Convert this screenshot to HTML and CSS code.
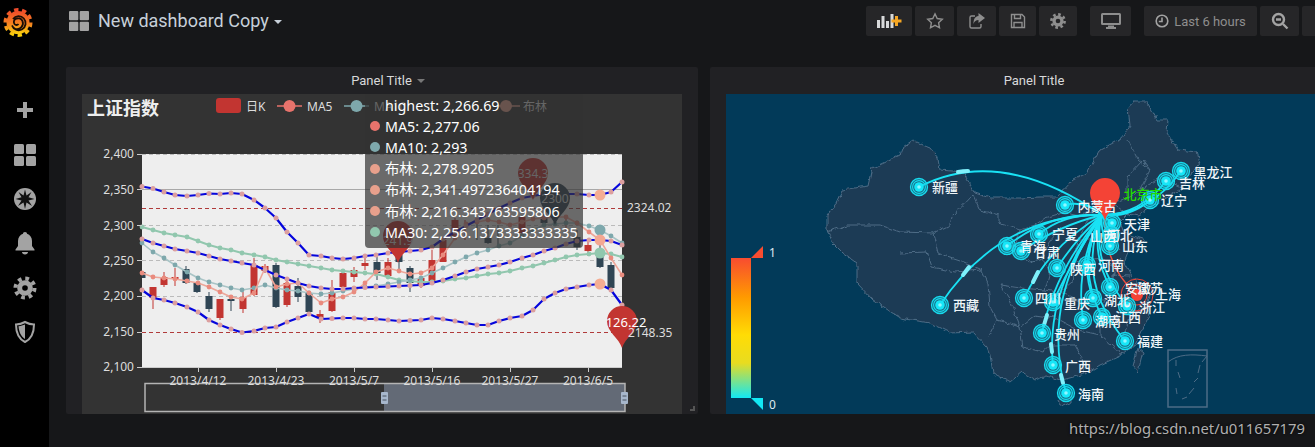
FILE: index.html
```html
<!DOCTYPE html>
<html lang="zh">
<head>
<meta charset="utf-8">
<title>New dashboard Copy</title>
<link rel="stylesheet" href="styles.css">
</head>
<body>
<svg class="defs" width="0" height="0" aria-hidden="true">
  <defs>
    <filter id="wiggle" x="-5%" y="-5%" width="110%" height="110%">
      <feTurbulence type="fractalNoise" baseFrequency=".16" numOctaves="2" seed="4"/>
      <feDisplacementMap in="SourceGraphic" scale="5" xChannelSelector="R" yChannelSelector="G"/>
    </filter>
    <marker id="dotBand" markerWidth="6" markerHeight="6" refX="3" refY="3" markerUnits="userSpaceOnUse"><circle cx="3" cy="3" r="2.500" fill="#dc9f9f"/></marker>
    <marker id="dotMa5" markerWidth="6" markerHeight="6" refX="3" refY="3" markerUnits="userSpaceOnUse"><circle cx="3" cy="3" r="2.400" fill="#e98b7e"/></marker>
    <marker id="dotMa10" markerWidth="6" markerHeight="6" refX="3" refY="3" markerUnits="userSpaceOnUse"><circle cx="3" cy="3" r="2.400" fill="#7ea8ac"/></marker>
    <marker id="dotMa30" markerWidth="6" markerHeight="6" refX="3" refY="3" markerUnits="userSpaceOnUse"><circle cx="3" cy="3" r="2.400" fill="#91c7ae"/></marker>
    <path id="pin" d="M0 27C-3 17-15 11-15 0A15 15 0 1 1 15 0C15 11 3 17 0 27Z"/>
    <g id="ripple">
      <circle r="8.500" fill="#12c4d8" fill-opacity=".35" stroke="#17dcef" stroke-width="1.300"/>
      <circle r="6.400" fill="none" stroke="#17dcef" stroke-width="1.100"/>
      <circle r="4.800" fill="#16e6f8"/>
      <circle r="1.800" fill="#8ff6ff"/>
    </g>
    <g id="cog">
      <circle r="5.600" fill="currentColor"/>
      <circle r="6.600" fill="none" stroke="currentColor" stroke-width="2.600" stroke-dasharray="2.600 2.580"/>
    </g>
    <linearGradient id="heat" x1="0" y1="0" x2="0" y2="1">
      <stop offset="0" stop-color="#f84c30"/>
      <stop offset=".28" stop-color="#ff9a00"/>
      <stop offset=".55" stop-color="#ffdc05"/>
      <stop offset=".75" stop-color="#e8dc20"/>
      <stop offset="1" stop-color="#12e8f4"/>
    </linearGradient>
    <linearGradient id="flame" x1="0" y1="0" x2="0" y2="1">
      <stop offset="0" stop-color="#ee4b2b"/>
      <stop offset=".55" stop-color="#f58220"/>
      <stop offset="1" stop-color="#fbd20c"/>
    </linearGradient>
  </defs>
</svg>

<div class="app">
  <nav class="sidebar">
    <div class="logo">
      <svg width="34" height="36" viewBox="0 0 34 36">
        <circle cx="17" cy="20.500" r="11.500" fill="url(#flame)"/>
        <circle cx="17" cy="20.500" r="12.800" fill="none" stroke="url(#flame)" stroke-width="3.400" stroke-dasharray="4.400 3.600"/>
        <path class="logo-spiral" d="M12 17a7 7 0 1 1-1 6.500 6.400 6.400 0 0 0 3.500 3.500 6 6 0 0 0 7-8 5 5 0 0 0-7-2 3.500 3.500 0 0 0-1 5 2.500 2.500 0 0 0 4 0"/>
      </svg>
    </div>
    <div class="nav-item">
      <svg width="20" height="20" viewBox="0 0 20 20"><path class="ic" d="M8 2h4v6h6v4h-6v6H8v-6H2V8h6z"/></svg>
    </div>
    <div class="nav-item">
      <svg width="24" height="24" viewBox="0 0 24 24"><g class="ic"><rect x="1" y="1" width="10" height="10" rx="1.500"/><rect x="13" y="1" width="10" height="10" rx="1.500"/><rect x="1" y="13" width="10" height="10" rx="1.500"/><rect x="13" y="13" width="10" height="10" rx="1.500"/></g></svg>
    </div>
    <div class="nav-item">
      <svg width="24" height="24" viewBox="0 0 24 24"><circle class="ic" cx="12" cy="12" r="11"/><path class="ic-dark" d="M12 2.500l1.500 6 5-3.500-3 5.200 6 1.800-6 1.500 3.500 5.500-5.500-3.500-1.500 6.500-1.500-6.500-5.500 3.500 3.500-5.500-6-1.500 6-1.800-3-5.200 5 3.500z"/></svg>
    </div>
    <div class="nav-item">
      <svg width="20" height="24" viewBox="0 0 20 24"><path class="ic" d="M10 1c1.300 0 2 .8 2 1.800C15 3.800 17 6.500 17 10v5l2.500 3.500v1H.5v-1L3 15v-5c0-3.500 2-6.200 5-7.200C8 1.800 8.700 1 10 1zM7 21h6c0 1.500-1.300 2.500-3 2.500S7 22.500 7 21z"/></svg>
    </div>
    <div class="nav-item">
      <svg class="cog-side" width="24" height="24" viewBox="-12 -12 24 24"><circle r="7.800" fill="currentColor"/><circle r="9.500" fill="none" stroke="currentColor" stroke-width="4" stroke-dasharray="3.700 3.760"/><circle r="2.800" fill="#000"/></svg>
    </div>
    <div class="nav-item">
      <svg width="22" height="24" viewBox="0 0 22 24"><path class="shield" d="M11 2c3 1.600 6 2.400 9 2.400 0 8-2 14-9 17.600C4 18.400 2 12.400 2 4.400 5 4.400 8 3.600 11 2z"/><path class="ic" d="M11 4.500V19C6.500 16 5 11.500 4.500 6.200 7 6 9 5.400 11 4.500z"/></svg>
    </div>
  </nav>

  <main class="main">
    <header class="topbar">
      <div class="title-wrap">
        <svg class="title-ic" width="20" height="20" viewBox="0 0 20 20"><g class="ic"><rect x="0" y="0" width="9.300" height="9.300" rx="1"/><rect x="10.700" y="0" width="9.300" height="9.300" rx="1"/><rect x="0" y="10.700" width="9.300" height="9.300" rx="1"/><rect x="10.700" y="10.700" width="9.300" height="9.300" rx="1"/></g></svg>
        <span class="title">New dashboard Copy</span>
        <span class="caret"></span>
      </div>
      <div class="tools">
        <div class="btn w46">
          <svg width="26" height="16" viewBox="0 0 26 16"><path fill="#d8d9da" d="M1 7h3v8H1zM5.500 3h3v12h-3zM10 8h3v7h-3zM14.500 1h3v14h-3z"/><path fill="#f5a623" d="M19 3h3v3.500h3.500v3H22V13h-3V9.500h-3.500v-3H19z"/></svg>
        </div>
        <div class="btn w39">
          <svg width="18" height="18" viewBox="0 0 18 18"><path class="ol" d="M9 1.800l2.200 4.700 5.100.7-3.700 3.500.9 5.100L9 13.400l-4.500 2.400.9-5.100L1.700 7.200l5.100-.7z"/></svg>
        </div>
        <div class="btn w39">
          <svg width="18" height="18" viewBox="0 0 18 18"><path class="ol" d="M7 4H3.500A1.500 1.500 0 0 0 2 5.500v9A1.500 1.500 0 0 0 3.500 16h8a1.500 1.500 0 0 0 1.500-1.500V12"/><path class="solid" d="M10.500 1L17 6l-6.500 5V8C8 8 6.500 9 5.500 12c0-5 1.500-7.500 5-8z"/></svg>
        </div>
        <div class="btn w37">
          <svg width="16" height="16" viewBox="0 0 16 16"><path class="ol" d="M1.500 1.500h10.500l2.500 2.500v10.500h-13z"/><path class="ol" d="M4.500 1.500v4h6v-4M4 14.500v-5h8v5"/></svg>
        </div>
        <div class="btn w38 cog-top">
          <svg width="18" height="18" viewBox="-9 -9 18 18"><use href="#cog"/><circle r="2.300" fill="#262628"/></svg>
        </div>
        <div class="btn w41 gap-l">
          <svg width="20" height="18" viewBox="0 0 20 18"><path class="solid" d="M1.500 1h17A1.500 1.500 0 0 1 20 2.500v9a1.500 1.500 0 0 1-1.500 1.500h-17A1.500 1.500 0 0 1 0 11.500v-9A1.500 1.500 0 0 1 1.500 1zM7 13.500h6V15h2v2H5v-2h2z"/><rect x="2" y="3" width="16" height="8" fill="#262628"/></svg>
        </div>
        <div class="btn range gap-l">
          <svg width="14" height="14" viewBox="0 0 14 14"><circle class="ol2" cx="7" cy="7" r="5.800"/><path class="ol2" d="M7 3.500V7.500H3.800"/></svg>
          <span>Last 6 hours</span>
        </div>
        <div class="btn w39">
          <svg width="18" height="18" viewBox="0 0 18 18"><circle class="ol2 thick" cx="7.500" cy="7.500" r="5.500"/><path class="ol2 thick" d="M12 12l4.500 4.500M5 7.500h5"/></svg>
        </div>
        <div class="btn w39"></div>
      </div>
    </header>

    <section class="panels">
      <article class="panel panel-left">
        <div class="panel-head head-left"><span>Panel Title</span><span class="panel-caret"></span></div>
        <div class="chart">
          <svg class="chart-svg" width="600" height="319" viewBox="82 94 600 319">
            <text class="chart-title" x="87" y="115">上证指数</text>
            <rect x="216" y="98" width="25" height="15" rx="3" fill="#c23531"/>
            <text class="legend" x="246" y="111">日K</text>
            <path d="M277 106h25" stroke="#e8736c" stroke-width="1.500"/><circle cx="289.500" cy="106" r="6" fill="#e8736c"/>
            <text class="legend" x="307" y="111">MA5</text>
            <path d="M344 106h25" stroke="#7ea8ac" stroke-width="1.500"/><circle cx="356.500" cy="106" r="6" fill="#7ea8ac"/>
            <text class="legend" x="374" y="111">MA10</text>
            <path d="M497 106h23" stroke="#e8a08c" stroke-width="1.500"/><circle cx="506" cy="106" r="6" fill="#e8a08c"/>
            <text class="legend" x="523" y="111">布林</text>

            <rect x="142" y="154" width="480" height="213" fill="#eeeeee"/>
            <g class="grid">
              <path class="grid-solid" d="M142 189.500H622"/>
              <path d="M142 154.500H622M142 225.500H622M142 260.500H622M142 296.500H622"/>
            </g>
            <path class="mark" d="M142 208.500H622M142 332.500H622"/>

            <g class="wick-r">
              <path d="M153 287V309M164 272V287M175 268V286M220 299V320M243 292V313M254 258V296M265 264V273M287 280V307M320 310V323M332 280V312M354 267V282M365 258V270M388 258V278M421 276V288M432 250V283M443 240V262M455 218V240M465 220V240M522 217V236M566 215V232M588 240V256"/>
            </g>
            <g class="wick-d">
              <path d="M186 266V284M197 282V293M209 292V312M231 296V311M276 263V308M298 278V302M309 291V313M377 257V280M399 250V272M410 266V292M477 220V240M488 225V244M498 225V248M544 214V225M577 230V250M600 245V268M611 262V290"/>
            </g>
            <g class="red">
              <rect x="149.500" y="287" width="7" height="11"/><rect x="160.500" y="277" width="7" height="8"/><rect x="171.500" y="277" width="7" height="2"/><rect x="216.500" y="299" width="7" height="19"/><rect x="239.500" y="297" width="7" height="12"/><rect x="250.500" y="265" width="7" height="30"/><rect x="261.500" y="266" width="7" height="5"/><rect x="283.500" y="283" width="7" height="22"/><rect x="316.500" y="314" width="7" height="4"/><rect x="328.500" y="292" width="7" height="19"/><rect x="339.500" y="273" width="7" height="14"/><rect x="350.500" y="270" width="7" height="7"/><rect x="361.500" y="263" width="7" height="3"/><rect x="384.500" y="262" width="7" height="14"/><rect x="417.500" y="278" width="7" height="8"/><rect x="428.500" y="260" width="7" height="21"/><rect x="439.500" y="240" width="7" height="22"/><rect x="451.500" y="220" width="7" height="16"/><rect x="518.500" y="217" width="7" height="16"/><rect x="584.500" y="245" width="7" height="6"/>
            </g>
            <g class="dark">
              <rect x="142" y="272" width="3.500" height="6"/><rect x="182.500" y="269" width="7" height="14"/><rect x="193.500" y="283" width="7" height="9"/><rect x="205.500" y="296" width="7" height="13"/><rect x="227.500" y="299" width="7" height="2"/><rect x="272.500" y="265" width="7" height="42"/><rect x="294.500" y="286" width="7" height="11"/><rect x="305.500" y="293" width="7" height="19"/><rect x="373.500" y="262" width="7" height="11"/><rect x="395.500" y="255" width="7" height="7"/><rect x="406.500" y="268" width="7" height="15"/><rect x="484.500" y="238" width="7" height="5"/><rect x="540.500" y="217" width="7" height="6"/><rect x="573.500" y="237" width="7" height="10"/><rect x="596.500" y="250" width="7" height="17"/><rect x="607.500" y="265" width="7" height="23"/>
            </g>

            <polyline class="ln ln-ma30" points="142,227 153,230 164,233 175,235 187,237 198,241 209,245 220,248 231,250 242,253 254,255 265,257 276,260 287,262 298,264 309,266 321,268 332,270 343,271 354,272 365,273 376,274 388,277 399,280 410,281 421,282 432,282 443,281 455,279 466,278 477,276 488,274 499,273 510,271 522,268 533,266 544,263 555,260 566,257 577,255 589,254 600,253 611,254 622,257"/>
            <polyline class="ln ln-ma10" points="142,243 153,252 164,258 175,265 187,272 198,278 209,282 220,285 231,288 242,290 254,288 265,285 276,288 287,290 298,291 309,293 321,294 332,293 343,291 354,289 365,287 376,286 388,284 399,282 410,280 421,278 432,273 443,268 455,262 466,257 477,253 488,250 499,246 510,243 522,236 533,230 544,225 555,224 566,223 577,223 589,226 600,230 611,236 622,243"/>
            <polyline class="ln ln-ma5" points="142,273 153,277 164,278 175,279 187,281 198,283 209,287 220,292 231,297 242,299 254,293 265,268 276,287 287,284 298,283 309,293 321,303 332,299 343,297 354,292 365,283 376,272 388,268 399,271 410,274 421,273 432,268 443,255 455,238 466,224 477,222 488,220 499,222 510,225 522,222 533,219 544,218 555,217 566,217 577,223 589,232 600,240 611,258 622,275"/>
            <polyline class="ln ln-band" points="142,186.500 153,188.500 164,192 175,195 187,196 198,195 209,193.500 220,194 231,193 242,194 254,200 265,208 276,218 287,232 298,243 309,255 321,256 332,258 343,259 354,258 365,256 376,255 388,253 399,252 410,251 421,250 432,247 443,239 455,232 466,226 477,220 488,214 499,208 510,203 522,198 533,196 544,194 555,194 566,194 577,194 589,195 600,195 611,192 622,182"/>
            <polyline class="ln ln-band" points="142,239 153,243 164,246 175,249 187,251 198,253 209,256 220,259 231,261 242,263 254,265 265,270 276,275 287,279 298,283 309,286 321,288 332,289 343,289 354,288 365,287.500 376,287 388,286.500 399,286 410,285.500 421,285 432,283 443,280 455,276 466,272 477,269 488,267 499,265 510,262 522,258 533,255 544,251 555,248 566,244 577,241 589,240 600,240 611,241 622,245"/>
            <polyline class="ln ln-band" points="142,290 153,298 164,300 175,303 187,307 198,312 209,320 220,325 231,329 242,332.500 254,331 265,328 276,327 287,322 298,318 309,314 321,319 332,318.500 343,318 354,318 365,319 376,319 388,320 399,321 410,320.500 421,320 432,318 443,319 455,321 466,323 477,325 488,325 499,321 510,318 522,316 533,310 544,299 555,293 566,289 577,287 589,285 600,284 611,290 622,305"/>

            <circle cx="600" cy="195" r="5.500" fill="#f4ad92"/>
            <circle cx="600" cy="230" r="5.500" fill="#7ea8ac"/>
            <circle cx="600" cy="240" r="5.500" fill="#f4a792"/>
            <circle cx="600" cy="253" r="5.500" fill="#91c7ae"/>
            <circle cx="600" cy="284" r="5.500" fill="#f4ad92"/>

            <use href="#pin" x="398" y="236" fill="#c23531"/>
            <use href="#pin" x="533" y="173" fill="#c23531"/>
            <use href="#pin" x="555" y="198" fill="#2f4554"/>
            <use href="#pin" x="622" y="321" fill="#c23531"/>
            <text class="pin-t" x="398" y="245">241.9</text>
            <text class="pin-t" x="533" y="178">334.3</text>
            <text class="pin-t" x="555" y="203">2300</text>
            <text class="pin-white" x="626" y="327">126.22</text>

            <text class="axis end" x="134" y="158">2,400</text>
            <text class="axis end" x="134" y="194">2,350</text>
            <text class="axis end" x="134" y="230">2,300</text>
            <text class="axis end" x="134" y="265">2,250</text>
            <text class="axis end" x="134" y="300">2,200</text>
            <text class="axis end" x="134" y="336">2,150</text>
            <text class="axis end" x="134" y="371">2,100</text>
            <path class="axis-line" d="M137 154.500h5M137 189.500h5M137 225.500h5M137 260.500h5M137 296.500h5M137 332.500h5M137 367.500h5M142 367.500H622M198.500 367v5M276.500 367v5M354.500 367v5M432.500 367v5M510.500 367v5M588.500 367v5"/>
            <text class="axis" x="627" y="212">2324.02</text>
            <text class="axis" x="628" y="337">2148.35</text>

            <rect class="zoom-sel" x="384" y="383.500" width="241" height="28"/>
            <rect class="zoom-box" x="145" y="383.500" width="480" height="28"/>
            <g class="zoom-h">
              <rect x="381" y="392" width="7" height="12" rx="1"/>
              <rect x="621" y="392" width="7" height="12" rx="1"/>
            </g>
            <path class="zoom-hl" d="M382.500 396h4M382.500 400h4M622.500 396h4M622.500 400h4"/>
            <text class="axis mid" x="198" y="385">2013/4/12</text>
            <text class="axis mid" x="276" y="385">2013/4/23</text>
            <text class="axis mid" x="354" y="385">2013/5/7</text>
            <text class="axis mid" x="432" y="385">2013/5/16</text>
            <text class="axis mid" x="510" y="385">2013/5/27</text>
            <text class="axis mid" x="588" y="385">2013/6/5</text>
          </svg>
          <div class="tooltip">
            <div class="tip-row">highest: 2,266.69</div>
            <div class="tip-row"><i class="dot c-ma5"></i>MA5: 2,277.06</div>
            <div class="tip-row"><i class="dot c-ma10"></i>MA10: 2,293</div>
            <div class="tip-row"><i class="dot c-boll"></i>布林: 2,278.9205</div>
            <div class="tip-row"><i class="dot c-boll"></i>布林: 2,341.497236404194</div>
            <div class="tip-row"><i class="dot c-boll"></i>布林: 2,216.343763595806</div>
            <div class="tip-row"><i class="dot c-ma30"></i>MA30: 2,256.1373333333335</div>
          </div>
        </div>
        <span class="resize"></span>
      </article>

      <article class="panel panel-right">
        <div class="panel-head"><span>Panel Title</span></div>
        <div class="map">
          <svg width="589" height="319" viewBox="726 94 589 319">
            <g class="wiggly">
              <path class="land" d="M913 140L925 146 930 148 938 158 940 170 963 172 975 193 990 198 1020 198 1040 197 1057 197 1073 180 1087 173 1100 150 1113 143 1122 138 1130 125 1128 108 1133 102 1147 102 1157 120 1168 120 1167 133 1178 150 1197 152 1200 162 1190 176 1182 188 1170 196 1150 207 1138 216 1128 214 1120 222 1124 233 1146 240 1128 252 1124 262 1132 276 1140 285 1150 295 1147 305 1150 316 1142 330 1135 345 1122 355 1100 365 1085 374 1062 380 1046 376 1035 380 1022 372 1010 382 993 373 990 355 987 347 973 332 950 333 930 323 900 318 873 300 857 283 857 263 843 253 833 243 827 230 827 215 835 205 842 190 868 186 872 168 883 163 900 155 903 147Z"/>
              <path class="land" d="M1060 395L1072 392 1072 402 1063 406 1058 402Z"/>
              <path class="land" d="M1138 348L1143 352 1138 372 1133 366Z"/>
              <path class="border" d="M827 232L848 225 880 225 900 232 933 233 950 225 952 217 973 195M973 195L980 210 998 215 998 223 1020 230 1035 225 1045 218 1065 212 1080 215 1100 210 1120 200 1130 197 1140 190 1150 170 1143 160 1127 177 1127 197M933 233L938 253 965 262 982 270 988 283 990 307 997 320 988 337M900 253L927 252 932 267 955 272 982 270M1020 230L1012 250 1030 262 1042 258 1050 272 1045 290 1020 288 1000 285M997 320L1020 327 1023 347 1042 352 1050 345 1075 345 1082 358 1085 374M1020 327L1035 315 1055 318 1078 330 1100 335 1122 355M1045 290L1060 292 1072 282 1075 262 1078 240 1088 220 1095 218M1075 262L1100 258 1115 266 1122 258M1060 292L1078 300 1105 300 1115 296 1125 302 1130 318 1122 340M1105 300L1100 318 1100 335M1115 266L1112 285 1115 296M1112 275L1130 276M1100 210L1112 222 1112 240 1120 250M1078 240L1098 240M1115 205L1130 216M1140 190L1160 178 1182 188M1128 140L1138 160 1150 170M1130 318L1147 305M1042 258L1050 240 1060 228M1000 285L1010 300 1020 327"/>
            </g>
            <rect class="inset" x="1168" y="350" width="39" height="57"/>
            <path class="inset-d" d="M1168 362C1178 354 1192 354 1207 356L1202 362M1176 360v6M1178 372l2 6M1200 365l-2 8M1176 388l1 6M1198 378l-4 4M1194 388l-5 6M1182 399l5-2"/>

            <g class="curves">
              <path d="M919 187Q1000 145 1102 215"/><path d="M1065 205Q1085 200 1102 215"/><path d="M1039 234Q1065 213 1102 215"/><path d="M1007 246Q1050 212 1102 215"/><path d="M1021 251Q1060 225 1102 215"/><path d="M940 305Q1000 215 1102 215"/><path d="M1024 298Q1050 245 1102 215"/><path d="M1053 302Q1075 255 1102 215"/><path d="M1042 333Q1055 270 1102 215"/><path d="M1053 365Q1045 290 1102 215"/><path d="M1066 393Q1040 300 1102 215"/><path d="M1083 320Q1075 265 1102 215"/><path d="M1093 298Q1078 260 1102 215"/><path d="M1102 317Q1075 265 1102 215"/><path d="M1125 341Q1075 280 1102 215"/><path d="M1057 268Q1075 240 1102 215"/><path d="M1087 265Q1090 240 1102 215"/><path d="M1110 287Q1090 250 1102 215"/><path d="M1127 306Q1090 260 1102 215"/><path d="M1166 181Q1140 215 1102 215"/><path d="M1181 171Q1150 215 1102 215"/><path d="M1150 200Q1130 218 1102 215"/><path d="M1112 223L1102 215"/><path d="M1110 246Q1100 235 1102 215"/><path d="M1111 235L1102 215"/>
            </g>
            <g class="tails">
              <path d="M958 172Q963 171 968 171"/><path d="M1044 325L1047 315"/><path d="M1033 282L1038 272"/><path d="M963 275L969 267"/><path d="M1052 352L1051 344"/><path d="M1063 383L1061 375"/>
            </g>
            <path class="route" d="M1105 215Q1103 265 1137 295"/>
            <circle class="target" cx="1137" cy="295" r="16"/>
            <circle class="target" cx="1137" cy="295" r="10"/>
            <circle cx="1137" cy="295" r="6" fill="#f44336"/>

            <use href="#ripple" x="919" y="187"/><use href="#ripple" x="1065" y="205"/><use href="#ripple" x="1039" y="234"/><use href="#ripple" x="1007" y="246"/><use href="#ripple" x="1021" y="251"/><use href="#ripple" x="940" y="305"/><use href="#ripple" x="1024" y="298"/><use href="#ripple" x="1053" y="302"/><use href="#ripple" x="1042" y="333"/><use href="#ripple" x="1053" y="365"/><use href="#ripple" x="1066" y="393"/><use href="#ripple" x="1083" y="320"/><use href="#ripple" x="1093" y="298"/><use href="#ripple" x="1102" y="317"/><use href="#ripple" x="1125" y="341"/><use href="#ripple" x="1057" y="268"/><use href="#ripple" x="1087" y="265"/><use href="#ripple" x="1110" y="287"/><use href="#ripple" x="1127" y="306"/><use href="#ripple" x="1166" y="181"/><use href="#ripple" x="1181" y="171"/><use href="#ripple" x="1150" y="200"/><use href="#ripple" x="1112" y="223"/><use href="#ripple" x="1110" y="246"/><use href="#ripple" x="1111" y="235"/>

            <use href="#pin" x="1105" y="193" fill="#f44336"/>

            <g class="labels">
              <text x="945" y="192">新疆</text><text x="1097" y="211">内蒙古</text><text x="1065" y="239">宁夏</text><text x="1033" y="251">青海</text><text x="1047" y="257">甘肃</text><text x="966" y="310">西藏</text><text x="1048" y="303">四川</text><text x="1077" y="308">重庆</text><text x="1067" y="339">贵州</text><text x="1078" y="371">广西</text><text x="1091" y="399">海南</text><text x="1108" y="326">湖南</text><text x="1117" y="305">湖北</text><text x="1128" y="322">江西</text><text x="1150" y="346">福建</text><text x="1083" y="274">陕西</text><text x="1111" y="270">河南</text><text x="1103" y="241">山西</text><text x="1120" y="240">河北</text><text x="1135" y="251">山东</text><text x="1137" y="229">天津</text><text x="1174" y="205">辽宁</text><text x="1192" y="188">吉林</text><text x="1213" y="177">黑龙江</text><text x="1138" y="293">安徽</text><text x="1150" y="293">江苏</text><text x="1152" y="312">浙江</text><text x="1168" y="299">上海</text>
              <text class="green" x="1143" y="199">北京市</text>
            </g>

            <rect x="731" y="258" width="20" height="140" fill="url(#heat)"/>
            <path d="M751 258H763V246Z" fill="#f84c30"/>
            <path d="M751 398H763V410Z" fill="#12e8f4"/>
            <text class="vm" x="769" y="257">1</text>
            <text class="vm" x="769" y="409">0</text>
          </svg>
        </div>
      </article>
    </section>
    <div class="watermark">https://blog.csdn.net/u011657179</div>
  </main>
</div>
</body>
</html>
```
FILE: styles.css
```css
* { box-sizing: border-box; }
html, body { margin: 0; height: 100%; overflow: hidden; background: #161719; }
body { font-family: Roboto, "Noto Sans CJK SC", sans-serif; color: #d8d9da; }
.defs { position: absolute; }
.app { display: flex; width: 1315px; height: 447px; overflow: hidden; }

.sidebar { flex: 0 0 49px; background: #000; display: flex; flex-direction: column; align-items: center; }
.logo { height: 88px; width: 100%; padding: 0 0 0 1px; display: flex; justify-content: flex-start; align-items: flex-start; }
.logo svg { margin-top: 2px; }
.logo-spiral { fill: none; stroke: #1a0d05; stroke-width: 1.800; }
.nav-item { height: 44.400px; width: 100%; display: flex; align-items: center; justify-content: center; color: #a3a3a3; }
.ic { fill: #a3a3a3; }
.ic-dark { fill: #111; }
.shield { fill: none; stroke: #a3a3a3; stroke-width: 2; }

.main { position: relative; flex: 1; min-width: 0; background: #161719; display: flex; flex-direction: column; overflow: hidden; }
.topbar { height: 67px; flex: none; display: flex; justify-content: space-between; padding: 6px 0 0 20px; }
.title-wrap { display: flex; align-items: flex-start; padding-top: 5px; }
.title-ic { margin-right: 9px; }
.title { font-size: 18px; line-height: 20px; color: #c7d0d9; }
.caret { margin: 9px 0 0 5px; border: 4px solid transparent; border-top-color: #c7d0d9; border-bottom: 0; }
.tools { display: flex; gap: 3px; width: 450px; flex: none; margin-right: -1px; overflow: hidden; }
.btn { height: 30px; flex: none; background: #262628; border-radius: 2px; display: flex; align-items: center; justify-content: center; color: #a3a3a3; }
.w46 { width: 46px; } .w39 { width: 39px; } .w37 { width: 37px; } .w38 { width: 38px; } .w41 { width: 41px; }
.gap-l { margin-left: 10px; }
.range { width: 113px; gap: 5px; font-size: 13px; color: #8e8e8e; }
.ol { fill: none; stroke: #8e8e8e; stroke-width: 1.400; }
.ol2 { fill: none; stroke: #a3a3a3; stroke-width: 1.600; }
.thick { stroke-width: 2.400; }
.solid { fill: #8e8e8e; }
.cog-top { color: #8e8e8e; }

.panels { display: flex; gap: 12px; padding-left: 17px; flex: none; height: 347px; }
.panel { position: relative; background: #212124; border-radius: 2px; flex: none; display: flex; flex-direction: column; }
.panel-left { width: 632px; padding: 0 16px; }
.panel-right { width: 632px; padding: 0 0 0 16px; }
.panel-head { height: 27px; flex: none; display: flex; justify-content: center; align-items: center; gap: 5px; font-size: 13px; color: #d8d9da; }
.head-left { padding-left: 12px; }
.panel-caret { border: 4px solid transparent; border-top-color: #777; border-bottom: 0; margin-top: 1px; }
.resize { position: absolute; right: 3px; bottom: 3px; width: 5px; height: 5px; border-right: 2px solid #555; border-bottom: 2px solid #555; }

.chart { position: relative; flex: 1; background: #333; overflow: hidden; font-family: "Noto Sans", "Noto Sans CJK SC", sans-serif; }
.chart-svg { display: block; }
.chart-svg text { font-family: "Noto Sans", "Noto Sans CJK SC", sans-serif; }
.chart-svg .chart-title { font-size: 18px; font-weight: 700; fill: #eee; }
.legend { font-size: 12px; fill: #ddd; }
.axis { font-size: 12px; fill: #ddd; }
.end { text-anchor: end; }
.mid { text-anchor: middle; }
.axis-line { stroke: #ccc; stroke-width: 1; fill: none; }
.grid path { stroke: #bbb; stroke-width: 1; fill: none; stroke-dasharray: 4 3; }
.grid .grid-solid { stroke-dasharray: none; stroke: #a8a8a8; }
.mark { stroke: #b03a3a; stroke-width: 1; stroke-dasharray: 4 3; fill: none; }
.red rect { fill: #c23531; }
.dark rect { fill: #2f4554; }
.wick-r path { stroke: #c23531; stroke-width: 1; fill: none; }
.wick-d path { stroke: #2f4554; stroke-width: 1; fill: none; }
.ln { fill: none; stroke-width: 1.600; stroke-linejoin: round; }
.ln-band { stroke: #0505dc; stroke-width: 2.200; marker-start: url(#dotBand); marker-mid: url(#dotBand); marker-end: url(#dotBand); }
.ln-ma5 { stroke: #eda699; marker-start: url(#dotMa5); marker-mid: url(#dotMa5); marker-end: url(#dotMa5); }
.ln-ma10 { stroke: #a8c4c6; marker-start: url(#dotMa10); marker-mid: url(#dotMa10); marker-end: url(#dotMa10); }
.ln-ma30 { stroke: #91c7ae; stroke-width: 2; marker-start: url(#dotMa30); marker-mid: url(#dotMa30); marker-end: url(#dotMa30); }
.pin-t { font-size: 12px; fill: #ddd; text-anchor: middle; }
.pin-white { font-size: 13px; fill: #fff; text-anchor: middle; }
.zoom-sel { fill: #636a76; }
.zoom-box { fill: none; stroke: #b4b4b4; stroke-width: 1.500; }
.zoom-h rect { fill: #a7b7cc; }
.zoom-hl { stroke: #46505e; stroke-width: 1; fill: none; }

.tooltip { position: absolute; left: 283px; top: 0; width: 218px; height: 154px; padding: 0 0 5px 20px; background: rgba(50, 50, 50, .7); border-radius: 0 0 4px 4px; display: flex; flex-direction: column; justify-content: flex-end; color: #fff; font-size: 14.300px; line-height: 21.200px; white-space: nowrap; }
.tip-row { position: relative; }
.dot { position: absolute; left: -15px; top: 5.500px; width: 10px; height: 10px; border-radius: 50%; }
.c-ma5 { background: #e8736c; } .c-ma10 { background: #7ea8ac; } .c-boll { background: #e8a08c; } .c-ma30 { background: #91c7ae; }

.map { flex: 1; background: #023a59; overflow: hidden; }
.map svg { display: block; }
.wiggly { filter: url(#wiggle); }
.land { fill: #1f3b55; stroke: #4d6c86; stroke-width: 1; }
.border { fill: none; stroke: #4d6c86; stroke-width: 1; }
.inset { fill: none; stroke: #4d6c86; stroke-width: 1.500; }
.inset-d { fill: none; stroke: #4d6c86; stroke-width: 1; }
.curves path { fill: none; stroke: #19e2f5; stroke-width: 1.800; }
.tails path { fill: none; stroke: #7ff0fb; stroke-width: 4; stroke-linecap: round; }
.route { fill: none; stroke: #ef5040; stroke-width: 1.500; }
.target { fill: none; stroke: #f44336; stroke-width: 1; }
.labels text { font-family: "Noto Sans CJK SC", sans-serif; font-size: 13px; fill: #f0f6f9; text-anchor: middle; font-weight: 500; }
.labels .green { fill: #22dd00; }
.vm { font-family: "Noto Sans", sans-serif; font-size: 12px; fill: #dfeaf0; }

.watermark { position: absolute; right: 10px; top: 418px; font-family: "Noto Sans", sans-serif; font-size: 14.800px; color: #b0b0b0; text-shadow: 0 0 3px #000; white-space: nowrap; }
```
